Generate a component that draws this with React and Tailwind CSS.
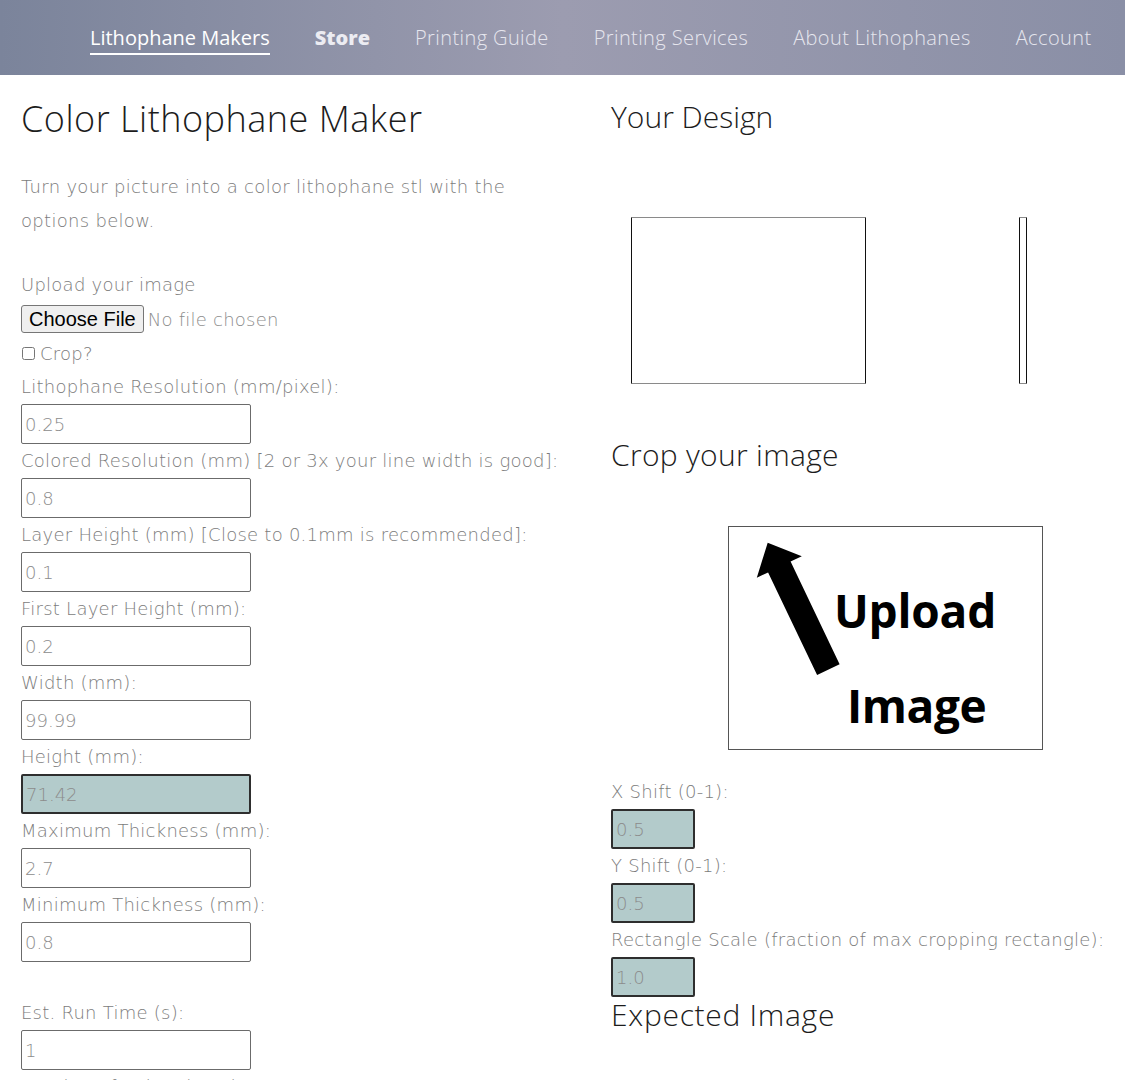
import React from "react";

const font = { fontFamily: '"Open Sans", "Liberation Sans", sans-serif' };
const body = { fontFamily: '"DejaVu Sans", "Open Sans", sans-serif', fontWeight: 200 };

function Field({ label, value, shaded, narrow }) {
  return (
    <div>
      <div className="h-[34px] leading-[34px] text-[18px] text-[#7c7c7c] whitespace-nowrap tracking-[0.25px]" style={body}>
        {label}
      </div>
      <div
        className={
          (narrow ? "w-[84px] " : "w-[230px] ") +
          "h-[40px] rounded-[2px] flex items-center pl-[3px] text-[18px] text-[#8c8c8c] " +
          (shaded ? "bg-[#b3cbcb] border-2 border-[#2e2e2e]" : "bg-white border border-[#6b6b6b]")
        }
        style={body}
      >
        {value}
      </div>
    </div>
  );
}

function Arrow() {
  return (
    <svg width="315" height="224" viewBox="0 0 315 224" className="absolute left-0 top-0">
      <polygon
        points="38.7,15.7 72.8,29.3 61.6,34.6 110.6,137.2 88.1,148 39.1,45.4 27.8,50.8"
        fill="#000"
      />
    </svg>
  );
}

export default function App() {
  const navItems = [
    { t: "Lithophane Makers", active: true },
    { t: "Store", bold: true },
    { t: "Printing Guide" },
    { t: "Printing Services" },
    { t: "About Lithophanes" },
    { t: "Account" },
  ];
  return (
    <div className="w-[1125px] h-[1080px] overflow-hidden bg-white" style={font}>
      <nav className="h-[75px] bg-gradient-to-r from-[#7b849b] via-[#9c9cb0] to-[#8a8fa6] flex items-center pl-[90px] gap-[45px]">
        {navItems.map((n) => (
          <div key={n.t} className="relative h-[75px] flex items-center">
            <span
              className={
                "text-[20px] whitespace-nowrap " +
                (n.active
                  ? "text-white font-normal"
                  : n.bold
                  ? "text-[#ececf2] font-extrabold"
                  : "text-[#e6e6ee] font-light tracking-[0.4px]")
              }
            >
              {n.t}
            </span>
            {n.active && <div className="absolute left-0 right-0 top-[53px] h-[2px] bg-white" />}
          </div>
        ))}
      </nav>

      <div className="flex">
        <div className="w-[590px] pl-[21px] shrink-0">
          <h1 className="mt-[22px] h-[44px] leading-[44px] text-[36px] font-light text-[#1c1c1c] whitespace-nowrap tracking-[0.5px]">
            Color Lithophane Maker
          </h1>
          <p className="mt-[29px] w-[500px] leading-[34px] text-[18px] text-[#7c7c7c] tracking-[0.3px]" style={body}>
            Turn your picture into a color lithophane stl with the options below.
          </p>
          <div className="mt-[30px] h-[34px] leading-[34px] text-[18px] text-[#7c7c7c] tracking-[0.25px]" style={body}>
            Upload your image
          </div>
          <div className="h-[34px] flex items-center">
            <button
              className="h-[28px] px-[7px] bg-[#efefef] border border-[#767676] rounded-[3px] text-[20px] text-black leading-none"
              style={{ fontFamily: '"Liberation Sans", Arial, sans-serif' }}
            >
              Choose File
            </button>
            <span className="ml-[4px] text-[18px] text-[#8c8c8c] tracking-[0.25px]" style={body}>
              No file chosen
            </span>
          </div>
          <div className="h-[34px] flex items-center">
            <input type="checkbox" className="m-0 ml-[1px] w-[13px] h-[13px]" />
            <span className="ml-[5px] text-[18px] text-[#7c7c7c] tracking-[0.25px]" style={body}>
              Crop?
            </span>
          </div>
          <Field label="Lithophane Resolution (mm/pixel):" value="0.25" />
          <Field label="Colored Resolution (mm) [2 or 3x your line width is good]:" value="0.8" />
          <Field label="Layer Height (mm) [Close to 0.1mm is recommended]:" value="0.1" />
          <Field label="First Layer Height (mm):" value="0.2" />
          <Field label="Width (mm):" value="99.99" />
          <Field label="Height (mm):" value="71.42" shaded />
          <Field label="Maximum Thickness (mm):" value="2.7" />
          <Field label="Minimum Thickness (mm):" value="0.8" />
          <div className="h-[34px]" />
          <Field label="Est. Run Time (s):" value="1" />
          <div className="h-[34px] leading-[34px] text-[18px] text-[#7c7c7c]" style={body}>
            Number of Colors (max):
          </div>
        </div>

        <div className="flex-1 pl-[21px]">
          <h2 className="mt-[22px] h-[40px] leading-[40px] text-[30px] font-light text-[#1c1c1c]">Your Design</h2>
          <svg width="500" height="298" viewBox="0 0 500 298" className="block">
            <line x1="20.5" y1="80.5" x2="254.5" y2="80.5" stroke="#8a8a8a" strokeWidth="1" />
            <line x1="20.5" y1="246.5" x2="254.5" y2="246.5" stroke="#8a8a8a" strokeWidth="1" />
            <line x1="20.5" y1="80.5" x2="20.5" y2="246.5" stroke="#111" strokeWidth="1" />
            <line x1="254.5" y1="80.5" x2="254.5" y2="246.5" stroke="#111" strokeWidth="1" />
            <line x1="408.5" y1="80.5" x2="415.5" y2="80.5" stroke="#8a8a8a" strokeWidth="1" />
            <line x1="408.5" y1="246.5" x2="415.5" y2="246.5" stroke="#8a8a8a" strokeWidth="1" />
            <line x1="408.5" y1="80.5" x2="408.5" y2="246.5" stroke="#111" strokeWidth="1" />
            <line x1="415.5" y1="80.5" x2="415.5" y2="246.5" stroke="#111" strokeWidth="1" />
          </svg>
          <h2 className="h-[40px] leading-[40px] text-[30px] font-light text-[#1c1c1c] tracking-[0.3px]">Crop your image</h2>
          <div className="mt-[51px] ml-[117px] w-[315px] h-[224px] border border-[#555] relative bg-white">
            <Arrow />
            <div
              className="absolute left-[105px] top-[53px] text-[46px] font-bold leading-[60px] text-black"
              style={{ fontFamily: '"Open Sans", sans-serif', letterSpacing: "-0.2px" }}
            >
              Upload
            </div>
            <div
              className="absolute left-[118px] top-[148px] text-[46px] font-bold leading-[60px] text-black"
              style={{ fontFamily: '"Open Sans", sans-serif', letterSpacing: "-0.4px" }}
            >
              Image
            </div>
          </div>
          <div className="mt-[25px]">
            <Field label="X Shift (0-1):" value="0.5" shaded narrow />
            <Field label="Y Shift (0-1):" value="0.5" shaded narrow />
            <Field label="Rectangle Scale (fraction of max cropping rectangle):" value="1.0" shaded narrow />
          </div>
          <h2 className="h-[36px] leading-[36px] text-[30px] font-light text-[#1c1c1c] tracking-[0.7px]">Expected Image</h2>
        </div>
      </div>
    </div>
  );
}
